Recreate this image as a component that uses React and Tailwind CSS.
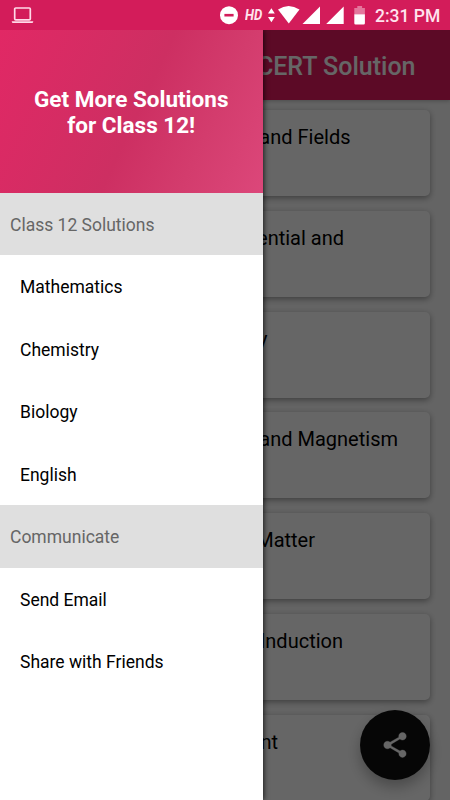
const chapters = [
  { title: "Electric Charges and Fields", end: "w-[330.5px]" },
  { title: "Electrostatic Potential and", end: "w-[324px]" },
  { title: "Current Electricity", end: "w-[247.5px]" },
  { title: "Moving Charges and Magnetism", end: "w-[378px]" },
  { title: "Magnetism and Matter", end: "w-[295px]" },
  { title: "Electromagnetic Induction", end: "w-[323px]" },
  { title: "Alternating Current", end: "w-[258px]" },
];

const sections = [
  { heading: "Class 12 Solutions", items: ["Mathematics", "Chemistry", "Biology", "English"] },
  { heading: "Communicate", items: ["Send Email", "Share with Friends"] },
];

function StatusBar() {
  return (
    <header className="flex h-[30px] shrink-0 items-center bg-[#d31c5a] text-white">
      <svg className="ml-[11px] h-[18px] w-[23px]" viewBox="0 0 23 18" fill="none">
        <rect x="3.7" y="2" width="15.6" height="11.8" rx="1" stroke="#ffd9e8" strokeWidth="1.7" />
        <path d="M.8 15.2h21.4v.6q0 1.2-1.2 1.2H2q-1.2 0-1.2-1.2z" fill="#ffd9e8" />
      </svg>
      <svg className="ml-[186px] h-[30px] w-[18px]" viewBox="0 0 18 30">
        <circle cx="9" cy="15.2" r="9" fill="#fff" />
        <rect x="4.4" y="13.9" width="9.2" height="2.6" fill="#d31c5a" />
      </svg>
      <span className="ml-[7px] w-[19px] origin-left scale-x-[0.94] whitespace-nowrap text-[14px] font-bold italic leading-[30px] text-[#ffe3ee]">HD</span>
      <svg className="h-[30px] w-[102px]" viewBox="264 0 102 30" fill="#fff">
        <path d="M271.4 8.3l3.4 5.2H268zM271.4 22.2l-3.4-5.2h6.8z" />
        <path d="M278 9.4Q288.5 2.4 299.5 9.4L288.8 23.5z" />
        <path d="M320 6.5V24H302.5zM343.7 6.5V24H326.2z" />
        <path d="M357.3 6h4.8v2h2.8v6.2h-10.6V8h3z" opacity=".4" />
        <path d="M354.3 14.2h10.6v9q0 1.3-1.3 1.3h-8q-1.3 0-1.3-1.3z" />
      </svg>
      <span className="ml-[9px] mt-[2px] whitespace-nowrap text-[17.5px] font-medium leading-[30px] text-[#ffe3ee]">2:31 PM</span>
    </header>
  );
}

function ChapterList() {
  return (
    <div className="flex h-full flex-col bg-[#fafafa]">
      <div className="z-10 flex h-[70px] shrink-0 items-center bg-[#e51b60] shadow-[0_1px_4px_rgba(0,0,0,0.25)]">
        <h1 className="w-[415.5px] whitespace-nowrap pt-[3px] text-right text-[25px] font-medium text-white">
          Physics NCERT Solution
        </h1>
      </div>
      <main className="flex flex-col gap-[14.8px] px-5 pt-[10px]">
        {chapters.map(({ title, end }) => (
          <article key={title} className="h-[86px] shrink-0 rounded-[5px] bg-white shadow-[0_2px_6px_rgba(0,0,0,0.38)]">
            <h2 className={`${end} whitespace-nowrap pt-[13px] text-right text-[20px] leading-[28px] text-black`}>{title}</h2>
          </article>
        ))}
      </main>
    </div>
  );
}

function Drawer() {
  return (
    <nav className="absolute inset-y-0 left-0 w-[262.5px] bg-white shadow-[1px_0_5px_rgba(0,0,0,0.7)]">
      <div className="flex h-[162.5px] items-center justify-center bg-[linear-gradient(115deg,#e12865_0%,#cd2f62_52%,#d33c6d_75%,#dc477a_100%)]">
        <p className="whitespace-nowrap pt-px text-center text-[22.5px] font-bold leading-[26px] text-white">
          Get More Solutions
          <br />
          for Class 12!
        </p>
      </div>
      {sections.map(({ heading, items }) => (
        <section key={heading}>
          <h3 className="flex h-[62.5px] items-center bg-[#dfdfdf] pl-[10px] pt-[2px] text-[17.5px] text-[#666]">{heading}</h3>
          <ul>
            {items.map((item) => (
              <li key={item} className="flex h-[62.5px] items-center pl-5 pt-[2px] text-[17.5px] text-black">
                {item}
              </li>
            ))}
          </ul>
        </section>
      ))}
    </nav>
  );
}

export default function App() {
  return (
    <div className="flex h-[800px] w-[450px] flex-col overflow-hidden font-['Roboto',sans-serif]">
      <StatusBar />
      <div className="relative h-[770px] overflow-hidden">
        <ChapterList />
        <button aria-label="Share" className="absolute bottom-[20px] right-[20px] z-10 flex size-[70px] items-center justify-center rounded-full bg-[#0f0f0f] shadow-[0_7px_14px_rgba(0,0,0,0.28)]">
          <svg className="size-[30px]" viewBox="0 0 24 24" fill="#fff" stroke="#fff" strokeWidth=".3">
            <path d="M18 16.08c-.76 0-1.44.3-1.96.77L8.91 12.7c.05-.23.09-.46.09-.7s-.04-.47-.09-.7l7.05-4.11c.54.5 1.25.81 2.04.81 1.66 0 3-1.34 3-3s-1.34-3-3-3-3 1.34-3 3c0 .24.04.47.09.7L8.04 9.81C7.5 9.31 6.79 9 6 9c-1.66 0-3 1.34-3 3s1.34 3 3 3c.79 0 1.5-.31 2.04-.81l7.12 4.16c-.05.21-.08.43-.08.65 0 1.61 1.31 2.92 2.92 2.92s2.92-1.31 2.92-2.92-1.31-2.92-2.92-2.92z" />
          </svg>
        </button>
        <div className="absolute inset-0 z-20 bg-black/60">
          <Drawer />
        </div>
      </div>
    </div>
  );
}
